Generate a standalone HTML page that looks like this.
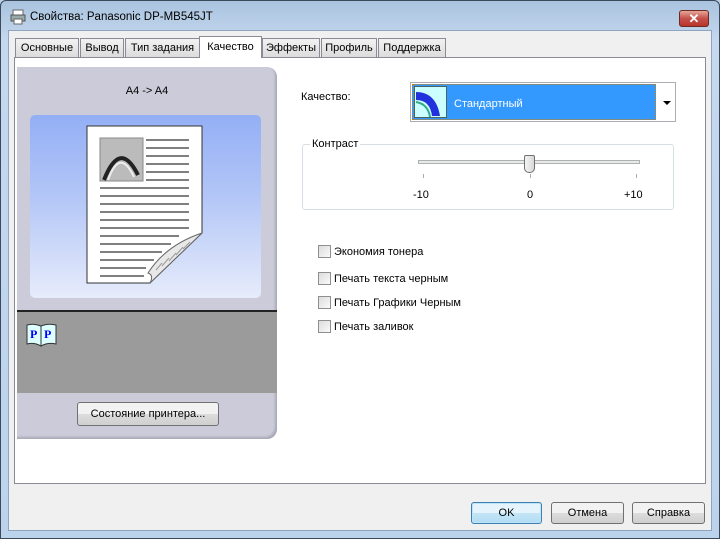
<!DOCTYPE html>
<html><head><meta charset="utf-8"><style>
*{box-sizing:border-box;margin:0;padding:0}
body{width:720px;height:539px;overflow:hidden;font-family:"Liberation Sans","Noto Sans CJK SC",sans-serif;font-size:11px;color:#000;background:#b9d1ea;position:relative}
.abs{position:absolute}
.frame{left:0;top:0;width:720px;height:539px;background:linear-gradient(#a9c3df,#c5d8ee 40px,#bcd3ec);border:1px solid #3c4a5c;border-radius:6px 6px 0 0}
.client{left:8px;top:30px;width:704px;height:501px;background:#f0f0f0;border:1px solid #8ea5c0}
.tab{top:38px;height:19px;border:1px solid #898c95;border-bottom:none;background:linear-gradient(#f2f2f2,#dcdcdc);font-size:11px;line-height:19px;text-align:center;color:#000;white-space:nowrap}
.panel{left:14px;top:57px;width:692px;height:427px;background:#fff;border:1px solid #898c95}
.btn{height:22px;border:1px solid #707070;border-radius:3px;background:linear-gradient(#f2f2f2 50%,#dddddd 50%,#cfcfcf);text-align:center;line-height:21px;font-size:11px}
.cb{width:13px;height:13px;border:1px solid #8e8f8f;background:linear-gradient(135deg,#dcdcdc,#fafafa)}
</style></head><body>
<div class="abs frame"></div>
<svg class="abs" style="left:10px;top:9px" width="16" height="16"><rect x="3" y="1" width="10" height="5" fill="#fff" stroke="#666"/><rect x="1" y="6" width="14" height="6" fill="#9aa" stroke="#555"/><rect x="4" y="10" width="8" height="5" fill="#fff" stroke="#666"/></svg>
<div class="abs" style="left:30px;top:11px;font-size:11.5px">Свойства: Panasonic DP-MB545JT</div>
<div class="abs" style="left:679px;top:10px;width:30px;height:17px;border:1px solid #6d2a22;border-radius:3px;background:linear-gradient(#e7a69a,#c5504a 50%,#b8352b);color:#fff;font-weight:bold;text-align:center;line-height:15px;font-size:13px">✕</div>
<div class="abs client"></div>
<div class="abs panel"></div>
<div class="abs tab" style="left:15px;width:64px">Основные</div>
<div class="abs tab" style="left:80px;width:44px">Вывод</div>
<div class="abs tab" style="left:125px;width:75px">Тип задания</div>
<div class="abs tab" style="left:199px;top:36px;height:22px;width:63px;background:#fff;line-height:21px;z-index:2">Качество</div>
<div class="abs tab" style="left:262px;width:58px">Эффекты</div>
<div class="abs tab" style="left:321px;width:56px">Профиль</div>
<div class="abs tab" style="left:378px;width:68px">Поддержка</div>

<div class="abs" style="left:17px;top:67px;width:260px;height:372px;background:#cbcbd9;border-radius:0 10px 10px 0;box-shadow:inset -2px -2px 2px #a8a8b8"></div>
<div class="abs" style="left:17px;top:85px;width:260px;text-align:center;font-size:11px">A4 -&gt; A4</div>
<div class="abs" style="left:30px;top:115px;width:231px;height:183px;border-radius:5px;background:linear-gradient(#93aff5,#b3c6f7 45%,#e6ecfb)"></div>
<svg class="abs" style="left:86px;top:125px" width="120" height="160">
<path d="M1 1H116V108L64 158H1Z" fill="#fff" stroke="#333"/>
<rect x="14" y="13" width="43" height="43" fill="#bbb" stroke="#888"/>
<path d="M18 55Q34 14 52 50" fill="none" stroke="#222" stroke-width="4"/>
<path d="M22 55Q34 22 48 52" fill="none" stroke="#eee" stroke-width="2"/>
<g stroke="#808080" stroke-width="2">
<path d="M60 15H103M60 23H103M60 31H103M60 39H103M60 47H103M60 55H103"/>
<path d="M14 63H103M14 71H103M14 79H103M14 87H103M14 95H103M14 103H103M14 111H93M14 119H85M14 127H76M14 135H68M14 143H60M14 151H58"/>
</g>
<path d="M116 108L64 158Q68 150 62 148Q80 120 116 108Z" fill="#e8e8e8" stroke="#666"/>
<g stroke="#999"><path d="M70 145L76 138M76 141L83 133M83 136L90 128M90 130L97 122M97 124L104 117"/></g>
</svg>
<div class="abs" style="left:17px;top:310px;width:260px;height:2px;background:#222"></div>
<div class="abs" style="left:17px;top:312px;width:260px;height:81px;background:#9b9b9b"></div>
<svg class="abs" style="left:26px;top:323px" width="32" height="24"><path d="M1 2Q8 0 15 3V23Q8 19 1 21Z" fill="#dff" stroke="#333"/><path d="M15 3Q22 0 30 2V21Q22 19 15 23Z" fill="#dff" stroke="#333"/><text x="4" y="15" font-family="Liberation Serif" font-weight="bold" font-size="12" fill="#00f">P</text><text x="18" y="15" font-family="Liberation Serif" font-weight="bold" font-size="12" fill="#00f">P</text></svg>
<div class="abs btn" style="left:77px;top:402px;width:142px;height:24px;line-height:23px">Состояние принтера...</div>

<div class="abs" style="left:301px;top:91px">Качество:</div>
<div class="abs" style="left:410px;top:82px;width:266px;height:40px;border:1px solid #abadb3;background:#fff"></div>
<div class="abs" style="left:412px;top:84px;width:244px;height:36px;background:#3399ff;border:1px dotted #d08000"></div>
<svg class="abs" style="left:414px;top:86px" width="34" height="32"><rect x="0.5" y="0.5" width="32" height="31" fill="#cff" stroke="#466"/><path d="M2 6Q22 6 26 30H18Q16 14 2 14Z" fill="#2233dd"/><path d="M2 16Q14 18 16 31" fill="none" stroke="#3a8" stroke-width="2"/></svg>
<div class="abs" style="left:454px;top:98px;color:#fff">Стандартный</div>
<div class="abs" style="left:663px;top:101px;width:0;height:0;border-left:4px solid transparent;border-right:4px solid transparent;border-top:4px solid #000"></div>

<div class="abs" style="left:302px;top:144px;width:372px;height:66px;border:1px solid #d5dfe5;border-radius:3px"></div>
<div class="abs" style="left:310px;top:138px;background:#fff;padding:0 2px">Контраст</div>
<div class="abs" style="left:418px;top:160px;width:222px;height:4px;border:1px solid #b0b0b0;background:#e7eaea"></div>
<div class="abs" style="left:524px;top:155px;width:11px;height:18px;border:1px solid #707070;border-radius:2px 2px 5px 5px;background:linear-gradient(90deg,#f4f4f4,#d8d8d8)"></div>
<div class="abs" style="left:423px;top:174px;width:1px;height:4px;background:#aaa"></div>
<div class="abs" style="left:530px;top:174px;width:1px;height:4px;background:#aaa"></div>
<div class="abs" style="left:636px;top:174px;width:1px;height:4px;background:#aaa"></div>
<div class="abs" style="left:413px;top:189px">-10</div>
<div class="abs" style="left:527px;top:189px">0</div>
<div class="abs" style="left:624px;top:189px">+10</div>

<div class="abs cb" style="left:318px;top:245px"></div><div class="abs" style="left:334px;top:246px">Экономия тонера</div>
<div class="abs cb" style="left:318px;top:272px"></div><div class="abs" style="left:334px;top:273px">Печать текста черным</div>
<div class="abs cb" style="left:318px;top:296px"></div><div class="abs" style="left:334px;top:297px">Печать Графики Черным</div>
<div class="abs cb" style="left:318px;top:320px"></div><div class="abs" style="left:334px;top:321px">Печать заливок</div>

<div class="abs btn" style="left:471px;top:502px;width:71px;border-color:#3c7fb1;background:linear-gradient(#e5f4fc 50%,#c4e5f6 50%,#b1dcf3);box-shadow:inset 0 0 0 1px #bde4f8">OK</div>
<div class="abs btn" style="left:551px;top:502px;width:73px">Отмена</div>
<div class="abs btn" style="left:632px;top:502px;width:73px">Справка</div>
</body></html>
